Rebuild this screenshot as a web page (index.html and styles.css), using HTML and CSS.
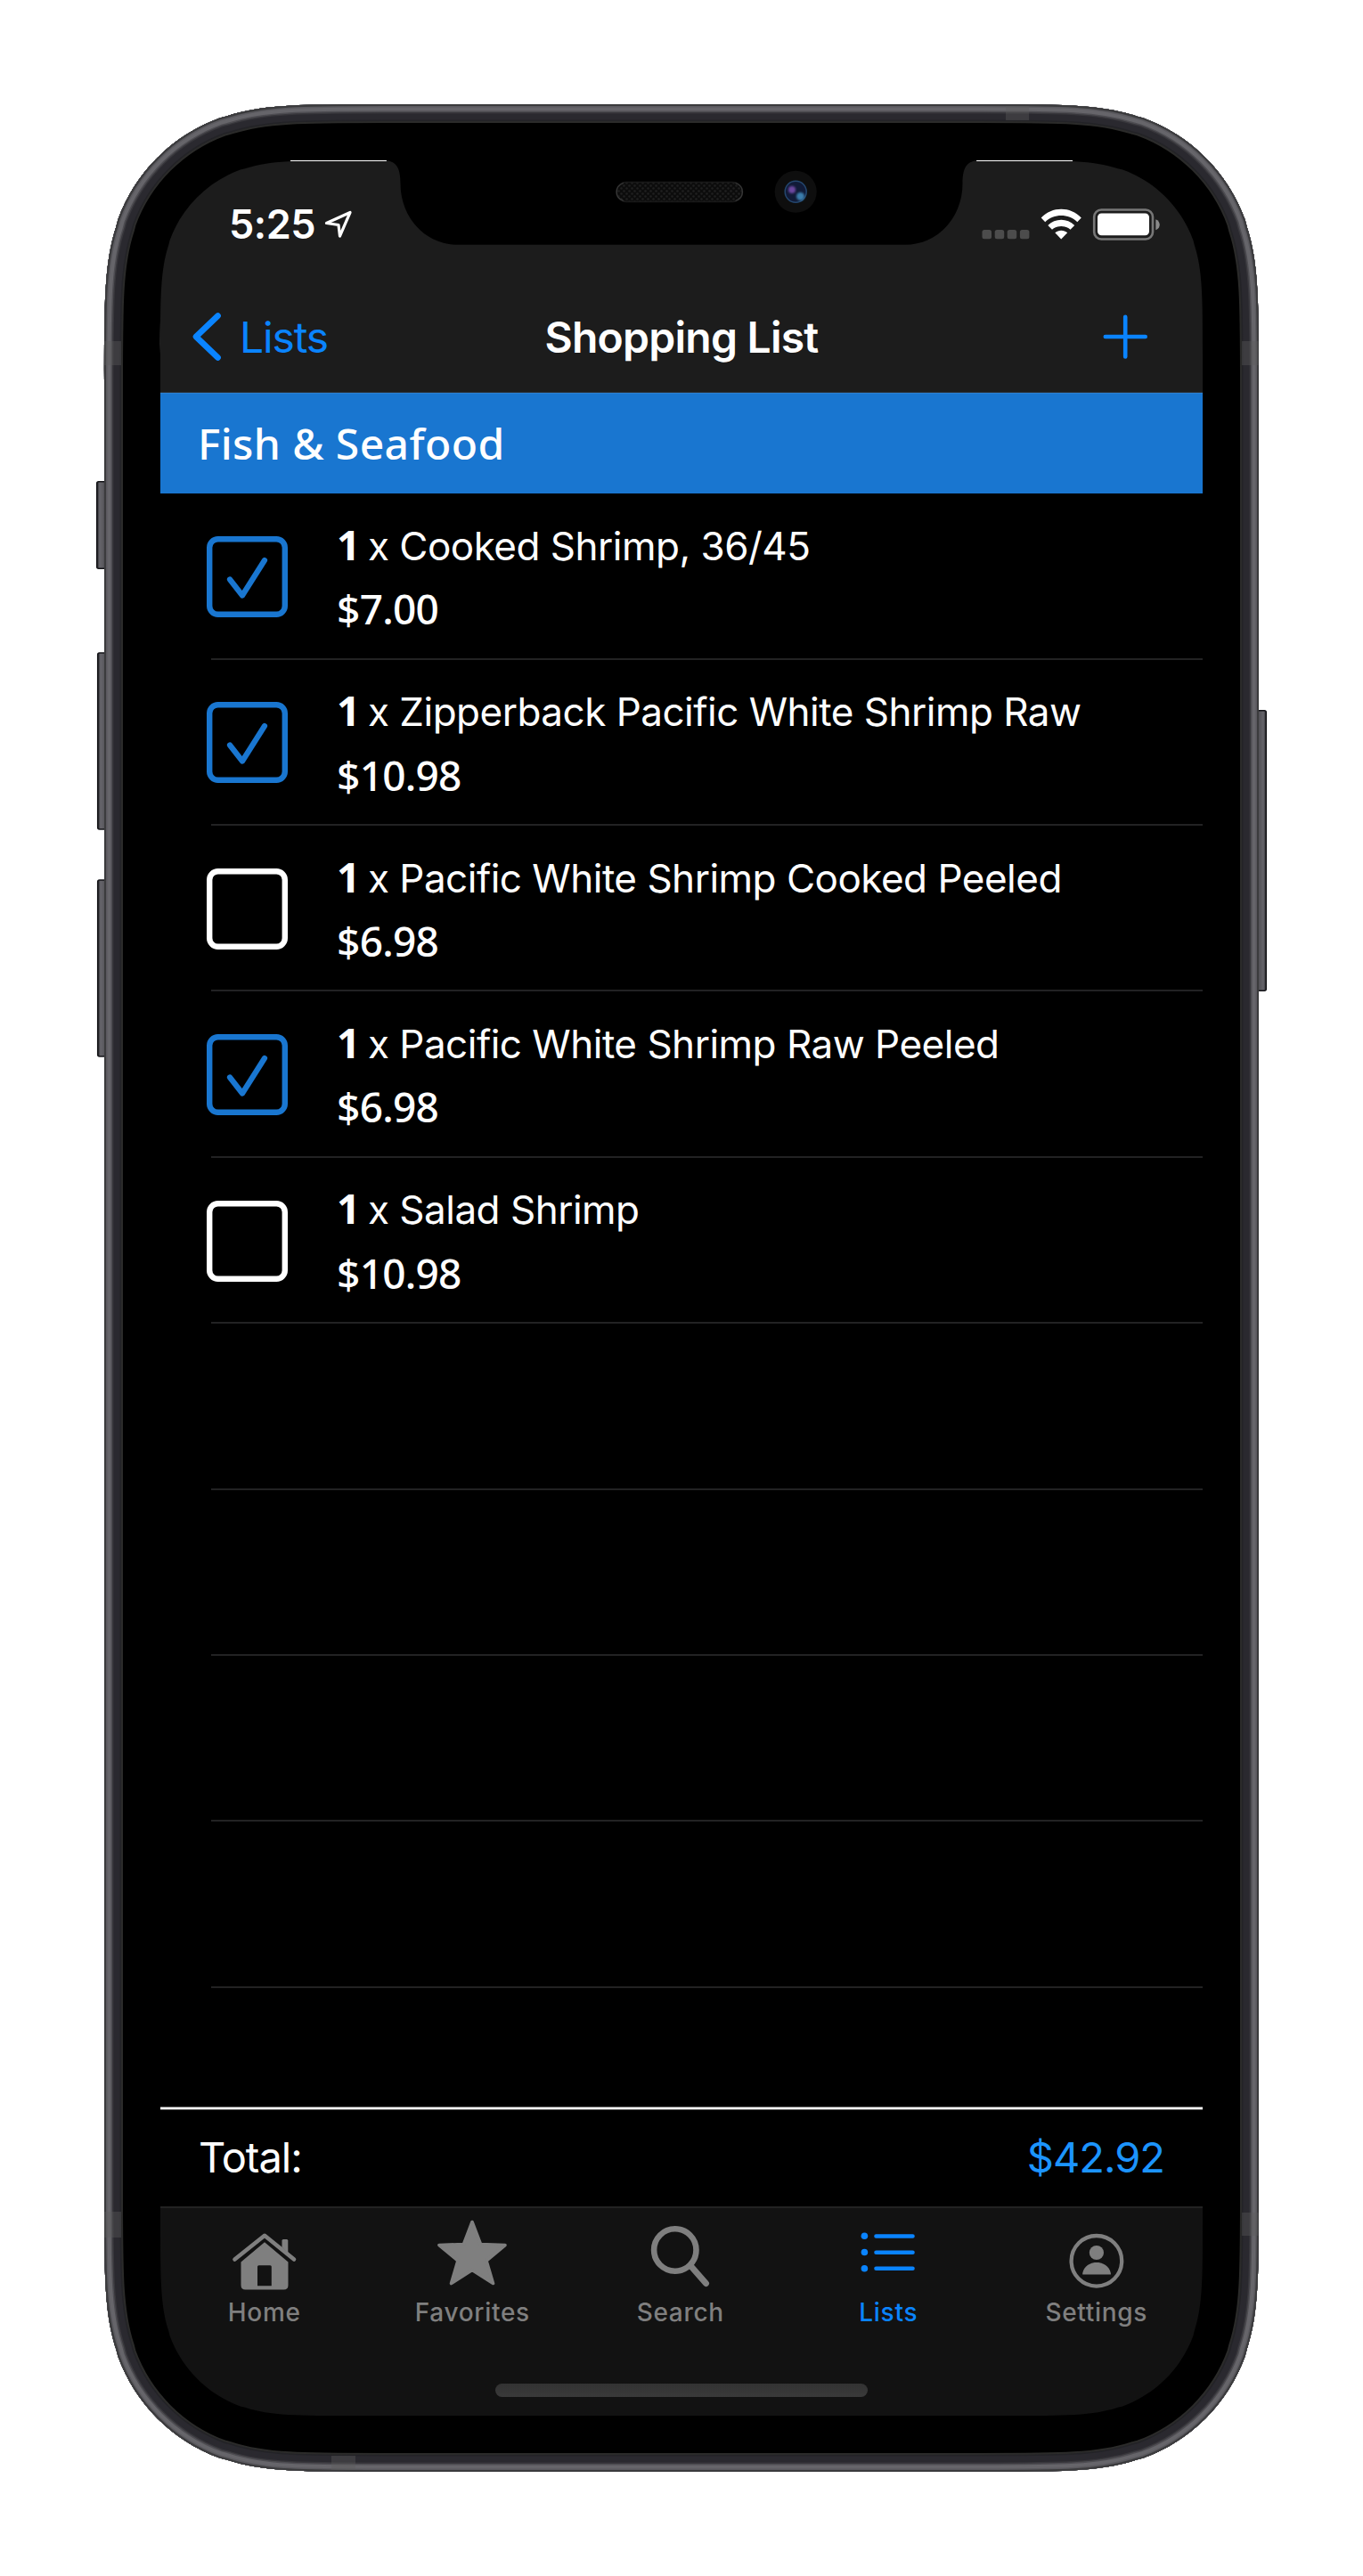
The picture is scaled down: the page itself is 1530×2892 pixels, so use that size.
FILE: index.html
```
<!DOCTYPE html>
<html lang="en">
<head>
<meta charset="utf-8">
<title>Shopping List</title>
<link rel="stylesheet" href="styles.css">
</head>
<body>
<div class="device">
  <main class="screen">
    <div class="status">
      <span class="time">5:25</span>
      <svg class="location" width="32" height="32" viewBox="364 236 32 32"><path d="M366.500 250.500L393 238.500L381.500 265L380 252.500Z" fill="none" stroke="#fff" stroke-width="3.200" stroke-linejoin="round"/></svg>
      <svg class="signals" width="256" height="40" viewBox="1050 231 256 40">
        <g fill="#4c4c4c"><rect x="1102.500" y="257" width="10.500" height="10.300" rx="2.500"/><rect x="1116.700" y="257" width="10.500" height="10.300" rx="2.500"/><rect x="1130.700" y="257" width="10.500" height="10.300" rx="2.500"/><rect x="1144.900" y="257" width="10.500" height="10.300" rx="2.500"/></g>
        <g fill="#fff">
          <path d="M1168.700 243.500C1181 230.500 1201.500 230.500 1213.800 243.500L1209.300 248.300C1199.500 238.700 1183 238.700 1173.200 248.300Z"/>
          <path d="M1176.300 252C1184.500 243.800 1198 243.800 1206.200 252L1201.500 256.800C1195.800 251.600 1186.700 251.600 1181 256.800Z"/>
          <path d="M1184.300 260.300C1188.200 256.800 1194.300 256.800 1198.200 260.300L1191.200 267.500Z"/>
          <rect x="1232" y="238.500" width="58" height="24.800" rx="4.500"/>
        </g>
        <rect x="1228.200" y="234.500" width="65.800" height="33" rx="8" fill="none" stroke="#777" stroke-width="2.600"/>
        <path d="M1297.300 245.200C1303.200 247 1303.200 255.500 1297.300 257.300Z" fill="#8a8a8a"/>
      </svg>
    </div>
    <header class="nav">
      <a class="back">
        <svg width="36" height="60" viewBox="214 349 36 60"><path d="M244.600 355.500L220 379L244.600 402.500" fill="none" stroke="#0a84ff" stroke-width="6.600" stroke-linecap="round" stroke-linejoin="round"/></svg>
        <span>Lists</span>
      </a>
      <h1>Shopping List</h1>
      <svg class="add" width="54" height="54" viewBox="1236 352.500 54 54"><path d="M1240.800 379.500H1285.700M1263.200 357.200V402" stroke="#0a84ff" stroke-width="4.600" stroke-linecap="round"/></svg>
    </header>
    <h2 class="section">Fish &amp; Seafood</h2>
    <ul class="list">
      <li class="row">
        <svg class="box checked" width="91" height="91" viewBox="0 0 91 91"><rect x="3.200" y="3.200" width="84.600" height="84.600" rx="9.500"/><path d="M26 48.500L40 66.500L65 27"/></svg>
        <div class="item"><p class="name"><b>1</b><span>x Cooked Shrimp, 36/45</span></p><p class="price">$7.00</p></div>
      </li>
      <li class="row">
        <svg class="box checked" width="91" height="91" viewBox="0 0 91 91"><rect x="3.200" y="3.200" width="84.600" height="84.600" rx="9.500"/><path d="M26 48.500L40 66.500L65 27"/></svg>
        <div class="item"><p class="name"><b>1</b><span>x Zipperback Pacific White Shrimp Raw</span></p><p class="price">$10.98</p></div>
      </li>
      <li class="row">
        <svg class="box" width="91" height="91" viewBox="0 0 91 91"><rect x="3.200" y="3.200" width="84.600" height="84.600" rx="9.500"/></svg>
        <div class="item"><p class="name"><b>1</b><span>x Pacific White Shrimp Cooked Peeled</span></p><p class="price">$6.98</p></div>
      </li>
      <li class="row">
        <svg class="box checked" width="91" height="91" viewBox="0 0 91 91"><rect x="3.200" y="3.200" width="84.600" height="84.600" rx="9.500"/><path d="M26 48.500L40 66.500L65 27"/></svg>
        <div class="item"><p class="name"><b>1</b><span>x Pacific White Shrimp Raw Peeled</span></p><p class="price">$6.98</p></div>
      </li>
      <li class="row">
        <svg class="box" width="91" height="91" viewBox="0 0 91 91"><rect x="3.200" y="3.200" width="84.600" height="84.600" rx="9.500"/></svg>
        <div class="item"><p class="name"><b>1</b><span>x Salad Shrimp</span></p><p class="price">$10.98</p></div>
      </li>
      <li class="row"></li>
      <li class="row"></li>
      <li class="row"></li>
      <li class="row"></li>
    </ul>
    <div class="total"><span>Total:</span><span class="amount">$42.92</span></div>
    <footer class="bottom">
      <nav class="tabs">
        <a class="tab">
          <svg width="84" height="88" viewBox="254 2486 84 88"><path d="M262.500 2536.500L296 2509.800L329 2536.500" fill="none" stroke="currentColor" stroke-width="4.600" stroke-linecap="round" stroke-linejoin="round"/><path d="M315.500 2523V2515.500Q315.500 2514 317 2514H320.800Q322.300 2514 322.300 2515.500V2529Z" fill="currentColor"/><path fill-rule="evenodd" d="M296 2517.300L322.500 2539.500V2565.500Q322.500 2570.500 317.500 2570.500H274.500Q269.500 2570.500 269.500 2565.500V2539.500ZM289.500 2543.300Q288 2543.300 288 2544.800V2566.200H303.800V2544.800Q303.800 2543.300 302.300 2543.300Z" fill="currentColor"/></svg>
          <span>Home</span>
        </a>
        <a class="tab">
          <svg width="84" height="88" viewBox="488 2486 84 88"><path d="M530 2494.500L539.500 2519.500L567 2520.500L546 2538L553.500 2563.500L530 2548.500L506.500 2563.500L514 2538L493 2520.500L520.500 2519.500Z" fill="currentColor" stroke="currentColor" stroke-width="3.600" stroke-linejoin="round"/></svg>
          <span>Favorites</span>
        </a>
        <a class="tab">
          <svg width="84" height="88" viewBox="722 2486 84 88"><g fill="none" stroke="currentColor" stroke-linecap="round"><circle cx="757.800" cy="2526" r="23.700" stroke-width="6.600"/><path d="M775 2543.500L792.500 2563.500" stroke-width="7"/></g></svg>
          <span>Search</span>
        </a>
        <a class="tab active">
          <svg width="84" height="88" viewBox="955.500 2486 84 88"><g fill="currentColor"><circle cx="970.900" cy="2510.300" r="3.800"/><circle cx="970.900" cy="2528.500" r="3.800"/><circle cx="970.900" cy="2546.700" r="3.800"/></g><path d="M984 2510.500H1025M984 2528.700H1025M984 2546.800H1025" stroke="currentColor" stroke-width="4.600" stroke-linecap="round"/></svg>
          <span>Lists</span>
        </a>
        <a class="tab">
          <svg width="84" height="88" viewBox="1188.800 2486 84 88"><circle cx="1230.700" cy="2538.300" r="28.300" fill="none" stroke="currentColor" stroke-width="4.300"/><circle cx="1230.700" cy="2529" r="8.100" fill="currentColor"/><path d="M1215 2553.600V2552C1218 2536 1243.500 2536 1246.700 2552V2553.600Z" fill="currentColor"/></svg>
          <span>Settings</span>
        </a>
      </nav>
      <div class="home-indicator"></div>
    </footer>
  </main>
  <svg class="frame" width="1530" height="2892" viewBox="0 0 1530 2892">
    <defs>
      <path id="body" d="M430.400 117H1099.600c90.300 0 135.400 0 176.100 13.400l7.800 2c53.100 19.300 94.800 61 114.100 114.100l2 7.800c13.400 40.700 13.400 85.800 13.400 176.100V2461.600c0 90.300 0 135.400-13.400 176.100l-2 7.800c-19.300 53.100-61 94.800-114.100 114.100l-7.800 2c-40.700 13.400-85.800 13.400-176.100 13.400H430.400c-90.300 0-135.400 0-176.100-13.400l-7.800-2c-53.100-19.300-94.800-61-114.100-114.100l-2-7.800c-13.400-40.700-13.400-85.800-13.400-176.100V430.400c0-90.300 0-135.400 13.400-176.100l2-7.800c19.300-53.100 61-94.800 114.100-114.100l7.800-2c40.700-13.400 85.800-13.400 176.100-13.400Z"/>
      <clipPath id="edge"><use href="#body"/></clipPath>
      <linearGradient id="left" x1="0" x2="1" y1="0" y2="0"><stop offset="0" stop-color="#1a1a1e"/><stop offset=".25" stop-color="#66656b"/><stop offset=".6" stop-color="#5a595e"/><stop offset="1" stop-color="#38373b"/></linearGradient>
      <linearGradient id="right" x1="1" x2="0" y1="0" y2="0"><stop offset="0" stop-color="#2a2a2e"/><stop offset=".25" stop-color="#66656b"/><stop offset="1" stop-color="#424145"/></linearGradient>
      <pattern id="mesh" width="6" height="6" patternUnits="userSpaceOnUse"><rect width="6" height="6" fill="#0c0c0c"/><circle cx="1.500" cy="1.500" r="1.300" fill="#1f1f1f"/><circle cx="4.500" cy="4.500" r="1.300" fill="#1f1f1f"/></pattern>
      <filter id="soft" x="-50%" y="-50%" width="200%" height="200%"><feGaussianBlur stdDeviation="1.200"/></filter>
    </defs>
    <g stroke="#141418" stroke-width="1.500">
      <rect x="108.700" y="540.700" width="12" height="97.500" rx="2" fill="url(#left)"/>
      <rect x="109.700" y="733" width="12" height="198" rx="2" fill="url(#left)"/>
      <rect x="109.700" y="988" width="12" height="198" rx="2" fill="url(#left)"/>
      <rect x="1409" y="797.700" width="12.300" height="314.500" rx="2" fill="url(#right)"/>
    </g>
    <path fill-rule="evenodd" d="M430.400 117H1099.600c90.300 0 135.400 0 176.100 13.400l7.800 2c53.100 19.300 94.800 61 114.100 114.100l2 7.800c13.400 40.700 13.400 85.800 13.400 176.100V2461.600c0 90.300 0 135.400-13.400 176.100l-2 7.800c-19.300 53.100-61 94.800-114.100 114.100l-7.800 2c-40.700 13.400-85.800 13.400-176.100 13.400H430.400c-90.300 0-135.400 0-176.100-13.400l-7.800-2c-53.100-19.300-94.800-61-114.100-114.100l-2-7.800c-13.400-40.700-13.400-85.800-13.400-176.100V430.400c0-90.300 0-135.400 13.400-176.100l2-7.800c19.300-53.100 61-94.800 114.100-114.100l7.800-2c40.700-13.400 85.800-13.400 176.100-13.400ZM397.100 180H1132.900c62.500 0 93.800 0 122 9.300l5.400 1.300c36.800 13.400 65.700 42.300 79.100 79.100l1.300 5.400c9.300 28.200 9.300 59.500 9.300 122V2494.900c0 62.500 0 93.800-9.300 122l-1.300 5.400c-13.400 36.800-42.300 65.700-79.100 79.100l-5.400 1.300c-28.200 9.300-59.500 9.300-122 9.300H397.100c-62.500 0-93.800 0-122-9.300l-5.400-1.300c-36.800-13.400-65.700-42.300-79.100-79.100l-1.300-5.400c-9.300-28.200-9.300-59.500-9.300-122V397.100c0-62.500 0-93.800 9.300-122l1.300-5.400c13.400-36.800 42.300-65.700 79.100-79.100l5.400-1.300c28.200-9.300 59.500-9.300 122-9.300Z"/>
    <g clip-path="url(#edge)" fill="none">
      <use href="#body" stroke="#2b2b2a" stroke-width="42"/>
      <use href="#body" stroke="#232327" stroke-width="38"/>
      <use href="#body" stroke="#2a292f" stroke-width="35"/>
      <use href="#body" stroke="#38373c" stroke-width="21"/>
      <use href="#body" stroke="#4e4d52" stroke-width="18"/>
      <use href="#body" stroke="#66656a" stroke-width="15"/>
      <use href="#body" stroke="#5a595e" stroke-width="7"/>
      <use href="#body" stroke="#3b3b3d" stroke-width="4"/>
      <g fill="#5c5c5c" fill-opacity=".38">
        <rect x="117" y="383" width="19" height="27"/><rect x="1394" y="383" width="19" height="27"/>
        <rect x="117" y="2483" width="19" height="29"/><rect x="1394" y="2484" width="19" height="26"/>
        <rect x="1129" y="119" width="26" height="16"/><rect x="372" y="2757" width="27" height="16"/>
      </g>
    </g>
    <path d="M326 180.500H434M1096 180.500H1204" stroke="#fff"/>
    <path d="M430 179V180C444 180 449.500 187 449.500 206C449.500 245 478 274.800 514 274.800H1016C1052 274.800 1080.500 245 1080.500 206C1080.500 187 1086 180 1100 180V179Z"/>
    <rect x="692" y="204.500" width="141.500" height="22" rx="11" fill="url(#mesh)" stroke="#181818" stroke-width="1.500"/>
    <path d="M700 205.500C689.500 209 689.500 222 700 225.500M825.500 205.500C836 209 836 222 825.500 225.500" fill="none" stroke="#383838" stroke-width="1.300"/>
    <circle cx="893.200" cy="215.300" r="23.500" fill="#0e0e0e"/>
    <circle cx="893.200" cy="215.300" r="12" fill="#111b38" stroke="#24476f" stroke-width="1.500"/>
    <g filter="url(#soft)"><circle cx="889" cy="213" r="4" fill="#6c479f"/><circle cx="898.500" cy="220.500" r="4.500" fill="#3b7dab"/></g>
  </svg>
</div>
</body>
</html>
```
FILE: styles.css
```
* { box-sizing: border-box; margin: 0; padding: 0; }
body { background: #fff; font-family: Inter, "Liberation Sans", sans-serif; }
svg { display: block; flex: none; }

.device { position: relative; width: 1530px; height: 2892px; padding: 180px; overflow: hidden; }
.frame { position: absolute; inset: 0; pointer-events: none; }

.screen { display: flex; flex-direction: column; width: 1170px; height: 2532px; background: #000; color: #fff; white-space: nowrap; }

.status { display: flex; align-items: center; height: 137px; padding: 6px 44px 0 77px; background: #1c1c1c; }
.time { font-size: 45px; font-weight: 600; letter-spacing: -.5px; }
.location { margin-left: 10px; }
.signals { margin-left: auto; }

.nav { display: grid; grid-template-columns: 1fr auto 1fr; align-items: center; height: 124px; padding: 0 60px 1px 34px; background: #1c1c1c; border-bottom: 1px solid #29333e; }
.back { display: flex; align-items: center; gap: 19px; color: #0a84ff; font-size: 48px; letter-spacing: -1.15px; }
.nav h1 { margin-left: 26px; font-size: 48px; font-weight: 600; letter-spacing: -.75px; }
.add { justify-self: end; }

.section { height: 113.3px; padding-left: 42px; background: #1976d0; border-top: 1px solid #2b80d2; font: 500 48px/112px "Noto Sans", "Open Sans", sans-serif; letter-spacing: .4px; }

.list { flex: 1; list-style: none; }
.row { display: flex; align-items: flex-start; height: 186.4px; margin-left: 56.600px; border-bottom: 2px solid #222223; }
.box { margin: 47.700px 55px 0 -4.500px; fill: none; stroke: #fff; stroke-width: 6.400px; stroke-linecap: round; stroke-linejoin: round; }
.box.checked { stroke: #1976d0; }
.box path { stroke-width: 6.200px; }
.item { padding-top: 21.600px; }
.name { display: flex; align-items: baseline; gap: 8.500px; height: 72.4px; font-size: 44px; line-height: 70.600px; letter-spacing: -.5px; }
.name b { font: 700 46px/70.600px "Noto Sans", "Open Sans", sans-serif; letter-spacing: 0; }
.price { font: 500 46px/71.600px "Noto Sans", "Open Sans", sans-serif; letter-spacing: -.75px; }

.total { display: flex; align-items: center; justify-content: space-between; height: 112px; padding: 1px 43px 0 43px; font-size: 47px; letter-spacing: -1px; background: linear-gradient(#777 1px, #fff 1px 3px, #555 3px 4px, #000 4px); }
.amount { color: #1c94fd; }

.bottom { height: 235px; background: #121212; border-top: 2px solid #222; }
.tabs { display: flex; height: 197px; padding-top: 7px; }
.tab { display: flex; flex-direction: column; align-items: center; width: 233.500px; color: #7f7f7f; font-size: 28px; font-weight: 500; line-height: 44px; letter-spacing: .7px; }
.tab.active { color: #0a84ff; }
.home-indicator { width: 418px; height: 15px; margin: 0 auto; border-radius: 8px; background: linear-gradient(#323232, #3a3a3a); }
```
